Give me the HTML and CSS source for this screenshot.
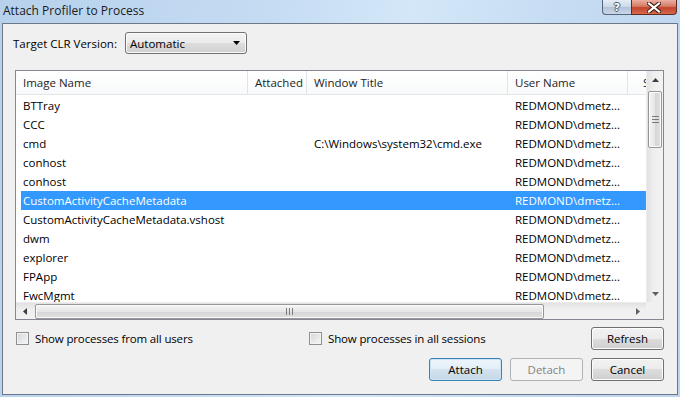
FILE: index.html
```html
<!DOCTYPE html>
<html lang="en">
<head>
    <meta charset="UTF-8">
    <title>Attach Profiler to Process</title>
    <link rel="stylesheet" href="styles.css">
</head>
<body>
    <div class="titlebar">
        <span class="title">Attach Profiler to Process</span>
        <div class="caption-btns">
            <span class="cap help">?</span>
            <span class="cap close">
                <svg width="14" height="11" viewBox="0 0 14 11"><path d="M2 1.5 L12 9.5 M12 1.5 L2 9.5" stroke="#3a1a14" stroke-width="4.2" stroke-linecap="square"/><path d="M2 1.5 L12 9.5 M12 1.5 L2 9.5" stroke="#ffffff" stroke-width="2.2" stroke-linecap="square"/></svg>
            </span>
        </div>
    </div>

    <div class="client">
        <div class="clr-row">
            <span class="label">Target CLR Version:</span>
            <div class="combo">
                <span>Automatic</span>
                <svg width="7" height="4" viewBox="0 0 7 4"><polygon points="0,0 7,0 3.5,4" fill="#000"/></svg>
            </div>
        </div>

        <div class="listbox">
            <div class="view">
                <div class="header cols">
                    <div class="hcell">Image Name</div>
                    <div class="hcell">Attached</div>
                    <div class="hcell">Window Title</div>
                    <div class="hcell">User Name</div>
                    <div class="hcell last">Session ID</div>
                </div>
                <div class="rows">
                    <div class="row cols"><div>BTTray</div><div></div><div></div><div>REDMOND\dmetz...</div><div></div></div>
                    <div class="row cols"><div>CCC</div><div></div><div></div><div>REDMOND\dmetz...</div><div></div></div>
                    <div class="row cols"><div>cmd</div><div></div><div>C:\Windows\system32\cmd.exe</div><div>REDMOND\dmetz...</div><div></div></div>
                    <div class="row cols"><div>conhost</div><div></div><div></div><div>REDMOND\dmetz...</div><div></div></div>
                    <div class="row cols"><div>conhost</div><div></div><div></div><div>REDMOND\dmetz...</div><div></div></div>
                    <div class="row cols selected"><div>CustomActivityCacheMetadata</div><div></div><div></div><div>REDMOND\dmetz...</div><div></div></div>
                    <div class="row cols"><div>CustomActivityCacheMetadata.vshost</div><div></div><div></div><div>REDMOND\dmetz...</div><div></div></div>
                    <div class="row cols"><div>dwm</div><div></div><div></div><div>REDMOND\dmetz...</div><div></div></div>
                    <div class="row cols"><div>explorer</div><div></div><div></div><div>REDMOND\dmetz...</div><div></div></div>
                    <div class="row cols"><div>FPApp</div><div></div><div></div><div>REDMOND\dmetz...</div><div></div></div>
                    <div class="row cols"><div>FwcMgmt</div><div></div><div></div><div>REDMOND\dmetz...</div><div></div></div>
                </div>
            </div>

            <div class="vscroll">
                <div class="arrow"><svg width="7" height="4" viewBox="0 0 7 4"><polygon points="0,4 7,4 3.5,0" fill="#3d3d3d"/></svg></div>
                <div class="vtrack">
                    <div class="vthumb">
                        <svg width="7" height="7" viewBox="0 0 7 7"><path d="M0 0.5 H7 M0 3.5 H7 M0 6.5 H7" stroke="#7a7a7a"/></svg>
                    </div>
                </div>
                <div class="arrow"><svg width="7" height="4" viewBox="0 0 7 4"><polygon points="0,0 7,0 3.5,4" fill="#606060"/></svg></div>
            </div>

            <div class="hscroll">
                <div class="arrow"><svg width="4" height="7" viewBox="0 0 4 7"><polygon points="4,0 4,7 0,3.5" fill="#3d3d3d"/></svg></div>
                <div class="htrack">
                    <div class="hthumb">
                        <svg width="7" height="7" viewBox="0 0 7 7"><path d="M0.5 0 V7 M3.5 0 V7 M6.5 0 V7" stroke="#7a7a7a"/></svg>
                    </div>
                </div>
                <div class="arrow"><svg width="4" height="7" viewBox="0 0 4 7"><polygon points="0,0 0,7 4,3.5" fill="#606060"/></svg></div>
            </div>
            <div class="corner"></div>
        </div>

        <div class="options-row">
            <label class="check users"><span class="box"></span>Show processes from all users</label>
            <label class="check"><span class="box"></span>Show processes in all sessions</label>
            <button class="btn refresh">Refresh</button>
        </div>

        <div class="actions">
            <button class="btn default">Attach</button>
            <button class="btn" disabled>Detach</button>
            <button class="btn">Cancel</button>
        </div>
    </div>
</body>
</html>
```

FILE: styles.css
```css
* {
    box-sizing: border-box;
}

html, body {
    margin: 0;
}

body {
    width: 680px;
    height: 397px;
    overflow: hidden;
    display: flex;
    flex-direction: column;
    font-family: "Segoe UI", "Open Sans", sans-serif;
    font-size: 11.5px;
    color: #000;
    background: linear-gradient(100deg, #b7d1ec 0%, #c4dbf2 35%, #d4e7f9 55%, #c6dcf2 75%, #bcd4ee 100%);
}

/* title bar */
.titlebar {
    height: 23px;
    display: flex;
    justify-content: space-between;
    align-items: flex-start;
    padding-left: 3px;
}

.title {
    font-size: 12px;
    line-height: 21px;
    color: #1b1b1b;
}

.caption-btns {
    display: flex;
    margin-right: 3px;
}

.cap {
    height: 15px;
    display: flex;
    align-items: center;
    justify-content: center;
    border: 1px solid #56657a;
    border-top: none;
}

.cap.help {
    width: 29px;
    border-right: none;
    border-radius: 0 0 0 4px;
    background: linear-gradient(#e4ecf6, #ccd8e6 50%, #b3c3d7 51%, #c9d7e7);
    font-family: "DejaVu Sans", sans-serif;
    font-size: 11px;
    font-weight: bold;
    color: #fff;
    text-shadow: -1px 0 #4b5a6e, 1px 0 #4b5a6e, 0 -1px #4b5a6e, 0 1px #4b5a6e;
}

.cap.close {
    width: 46px;
    border-color: #5e2c22;
    border-radius: 0 0 4px 0;
    background: linear-gradient(#eab0a2, #d57a64 45%, #c3432b 55%, #d56a4f);
}

/* dialog body */
.client {
    flex: 1;
    margin: 0 2px 2px 2px;
    border: 1px solid #6c7888;
    background-color: #f0f0f0;
    padding: 8px 13px 13px 12px;
    display: flex;
    flex-direction: column;
}

.clr-row {
    display: flex;
    align-items: center;
    height: 22px;
    margin-left: -2px;
}

.label {
    width: 112px;
}

.combo {
    width: 122px;
    height: 22px;
    display: flex;
    align-items: center;
    justify-content: space-between;
    padding: 0 6px 0 4px;
    border: 1px solid #707070;
    border-radius: 3px;
    background: linear-gradient(#f3f3f3 0%, #ebebeb 50%, #dddddd 50%, #d0d0d0 100%);
    box-shadow: inset 0 0 0 1px #fbfbfb;
}

/* process list */
.listbox {
    margin-top: 16px;
    height: 250px;
    border: 1px solid #828790;
    background-color: #fff;
    display: grid;
    grid-template-columns: 630px 17px;
    grid-template-rows: 231px 17px;
}

.view {
    overflow: hidden;
}

.cols {
    display: grid;
    grid-template-columns: 232px 59px 201px 120px 100px;
    white-space: nowrap;
}

.header {
    height: 24px;
    border-bottom: 1px solid #e5e5e5;
    background: linear-gradient(#ffffff, #f8f9fa);
    color: #1e1e1e;
}

.hcell {
    padding-left: 7px;
    line-height: 23px;
    border-right: 1px solid #e0e4e9;
}

.hcell.last {
    padding-left: 15px;
}

.rows {
    padding-top: 1px;
}

.row {
    height: 19px;
    line-height: 19px;
}

.row div {
    padding-left: 7px;
}

.row.selected {
    background: linear-gradient(to right, transparent 5px, #3399ff 5px);
    color: #fff;
}

/* scrollbars */
.vscroll {
    display: flex;
    flex-direction: column;
    background: linear-gradient(to right, #e2e2e2, #efefef 40%, #f2f2f2);
    border-left: 1px solid #ececec;
}

.hscroll {
    display: flex;
    background: linear-gradient(#e2e2e2, #efefef 40%, #f2f2f2);
    border-top: 1px solid #ececec;
}

.arrow {
    flex: 0 0 17px;
    display: flex;
    align-items: center;
    justify-content: center;
}

.vtrack {
    flex: 1;
    padding: 3px 1px 0 1px;
}

.htrack {
    flex: 1;
    padding: 1px 0 1px 2px;
}

.vthumb,
.hthumb {
    display: flex;
    align-items: center;
    justify-content: center;
    border: 1px solid #979797;
    border-radius: 2px;
    box-shadow: inset 0 0 0 1px #fafafa;
}

.vthumb {
    height: 57px;
    background: linear-gradient(to right, #f4f4f4, #e6e6e6 50%, #d6d6d6 51%, #e0e0e0);
}

.hthumb {
    width: 509px;
    height: 15px;
    background: linear-gradient(#f4f4f4, #e6e6e6 50%, #d6d6d6 51%, #e0e0e0);
}

.corner {
    background-color: #f0f0f0;
}

/* options and buttons */
.options-row {
    margin-top: 7px;
    height: 23px;
    display: flex;
    align-items: center;
}

.check {
    display: flex;
    align-items: center;
    gap: 6px;
    letter-spacing: -0.15px;
}

.check.users {
    width: 293px;
    margin-left: 1px;
}

.box {
    width: 13px;
    height: 13px;
    border: 1px solid #8e8f8f;
    background: linear-gradient(135deg, #d2d5d9, #f7f7f7);
    box-shadow: inset 0 0 0 1px #f4f4f4;
}

.btn {
    width: 73px;
    height: 23px;
    padding: 0;
    font-family: inherit;
    font-size: 11.5px;
    color: #000;
    border: 1px solid #707070;
    border-radius: 3px;
    background: linear-gradient(#f2f2f2 0%, #ebebeb 50%, #dddddd 50%, #cfcfcf 100%);
    box-shadow: inset 0 0 0 1px #fcfcfc;
}

.refresh {
    margin-left: auto;
}

.btn.default {
    border-color: #3c7fb1;
    background: linear-gradient(#eef6fb 0%, #e2eef7 50%, #d3e2ee 50%, #c6d8e6 100%);
    box-shadow: inset 0 0 0 1px #c9e6f8;
}

.btn:disabled {
    border-color: #adb2b5;
    background: #f4f4f4;
    box-shadow: none;
    color: #838383;
}

.actions {
    margin-top: 8px;
    display: flex;
    justify-content: flex-end;
    gap: 8px;
}
```
